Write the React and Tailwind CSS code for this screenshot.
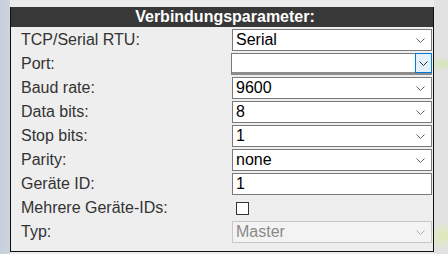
import React from "react";

const Chevron = ({ color = "#606060" }) => (
  <svg width="9" height="5" viewBox="0 0 9 5" fill="none">
    <path d="M0.5 0.5 L4.5 4.5 L8.5 0.5" stroke={color} strokeWidth="1" />
  </svg>
);

const Select = ({ value, focused, disabled }) => {
  if (disabled) {
    return (
      <div className="flex h-[22px] w-[200px] items-center justify-between border border-[#c8c8c8] bg-[#f3f3f3] pl-[3px] pr-[6px] text-[#8a8a8a]">
        <span>{value}</span>
        <Chevron color="#b0b0b0" />
      </div>
    );
  }
  if (focused) {
    return (
      <div className="flex h-[22px] w-[201px] -ml-px items-stretch border border-[#7a7a7a] border-b-[3px] border-b-[#8c8c8c] bg-white">
        <span className="flex-1 pl-[4px]">{value}</span>
        <span className="flex w-[17px] items-center justify-center border border-[#0078d7] bg-[#e5f1fb] -mr-px -my-px">
          <Chevron color="#333" />
        </span>
      </div>
    );
  }
  return (
    <div className="flex h-[22px] w-[200px] items-center justify-between border border-[#7a7a7a] bg-white pl-[3px] pr-[6px]">
      <span>{value}</span>
      <Chevron />
    </div>
  );
};

const rows = [
  { label: "TCP/Serial RTU:", type: "select", value: "Serial" },
  { label: "Port:", type: "select", value: "", focused: true },
  { label: "Baud rate:", type: "select", value: "9600" },
  { label: "Data bits:", type: "select", value: "8" },
  { label: "Stop bits:", type: "select", value: "1" },
  { label: "Parity:", type: "select", value: "none" },
  { label: "Geräte ID:", type: "input", value: "1" },
  { label: "Mehrere Geräte-IDs:", type: "checkbox" },
  { label: "Typ:", type: "select", value: "Master", disabled: true },
];

export default function App() {
  return (
    <div
      className="h-[254px] w-[448px] overflow-hidden pl-[10px] pt-[7px] text-[16px] leading-none"
      style={{
        fontFamily: '"Liberation Sans", Arial, sans-serif',
        background:
          "radial-gradient(ellipse 30px 8px at 445px 64px, #d6e6b8, transparent), radial-gradient(ellipse 26px 14px at 446px 236px, #dcebb8, transparent), linear-gradient(to right, #c6cfdb 0px, #ccd4df 10px, #ececec 10px, #ececec 434px, #e2e2e2 434px)",
      }}
    >
      <div className="w-[424px] border-x border-b border-[#111] bg-[#eeeeee] pb-[8px]">
        <div className="flex h-[20px] items-center justify-center bg-[#383838] pl-[6px] font-bold text-white">
          Verbindungsparameter:
        </div>
        <div className="flex flex-col gap-[2px] pt-[2px]">
          {rows.map((row, index) => (
            <div key={index} className="flex h-[22px] items-center">
              <div className="w-[221px] pl-[10px] text-[#333]">{row.label}</div>
              {row.type === "select" && (
                <Select value={row.value} focused={row.focused} disabled={row.disabled} />
              )}
              {row.type === "input" && (
                <div className="flex h-[22px] w-[200px] items-center border border-[#7a7a7a] bg-white pl-[3px]">
                  {row.value}
                </div>
              )}
              {row.type === "checkbox" && (
                <div className="ml-[4px] h-[13px] w-[13px] border border-[#333] bg-white" />
              )}
            </div>
          ))}
        </div>
      </div>
    </div>
  );
}
